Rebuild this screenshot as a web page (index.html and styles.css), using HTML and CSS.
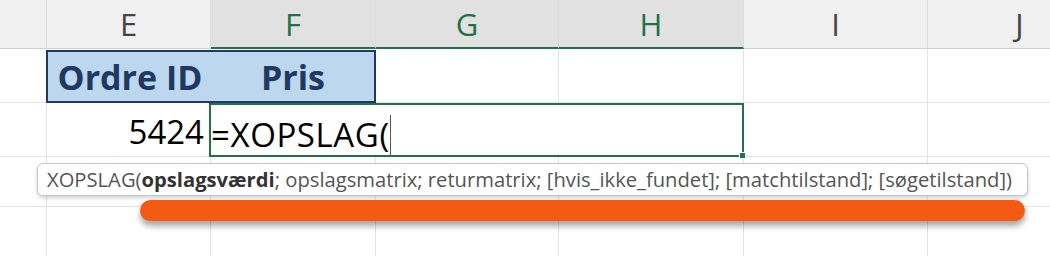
FILE: index.html
```html
<!DOCTYPE html>
<html lang="da">
<head>
  <meta charset="UTF-8">
  <title>XOPSLAG</title>
  <link rel="stylesheet" href="styles.css">
</head>
<body>
  <div class="sheet">
    <div class="grid">
      <!-- kolonneoverskrifter -->
      <div class="colhead"></div>
      <div class="colhead">E</div>
      <div class="colhead sel">F</div>
      <div class="colhead sel">G</div>
      <div class="colhead sel">H</div>
      <div class="colhead">I</div>
      <div class="colhead">J</div>

      <!-- række 1 -->
      <div class="cell"></div>
      <div class="cell head-box">
        <span class="hcell">Ordre ID</span>
        <span class="hcell">Pris</span>
      </div>
      <div class="cell"></div>
      <div class="cell"></div>
      <div class="cell"></div>
      <div class="cell"></div>

      <!-- række 2 -->
      <div class="cell"></div>
      <div class="cell num">5424</div>
      <div class="cell active">=XOPSLAG(<span class="caret"></span><span class="handle"></span></div>
      <div class="cell"></div>
      <div class="cell"></div>

      <!-- række 3-4 -->
      <div class="cell"></div><div class="cell"></div><div class="cell"></div><div class="cell"></div>
      <div class="cell"></div><div class="cell"></div><div class="cell"></div>
      <div class="cell"></div><div class="cell"></div><div class="cell"></div><div class="cell"></div>
      <div class="cell"></div><div class="cell"></div><div class="cell"></div>
    </div>

    <div class="tooltip">XOPSLAG(<b>opslagsværdi</b>; opslagsmatrix; returmatrix; [hvis_ikke_fundet]; [matchtilstand]; [søgetilstand])</div>
    <div class="marker"></div>
  </div>
</body>
</html>
```

FILE: styles.css
```css
body {
  margin: 0;
  background: #fff;
  overflow: hidden;
}
.sheet {
  position: relative;
  width: 1050px;
  height: 256px;
  overflow: hidden;
}
.grid {
  display: grid;
  grid-template-columns: 47px 164px 165px 183px 185px 184px 184px;
  grid-template-rows: 49px 54px 54px 50px 50px;
  width: 1112px;
}
.colhead {
  background: #f0f0f0;
  border-right: 1px solid #dcdcdc;
  border-bottom: 1px solid #d0d0d0;
  font-family: "Open Sans", sans-serif;
  font-size: 31px;
  color: #444;
  display: flex;
  align-items: center;
  justify-content: center;
  box-sizing: border-box;
}
.colhead.sel {
  background: #e1e1e1;
  color: #217346;
  border-bottom: 2px solid #217346;
}
.cell {
  border-right: 1px solid #e2e2e2;
  border-bottom: 1px solid #e2e2e2;
  box-sizing: border-box;
  font-family: "Open Sans", sans-serif;
  font-size: 33px;
  color: #000;
}
.head-box {
  grid-column: span 2;
  background: #bdd7ee;
  border: 2px solid #203864;
  display: grid;
  grid-template-columns: 164px 1fr;
  align-items: center;
  margin-left: -1px;
  margin-top: 1px;
}
.hcell {
  text-align: center;
  font-weight: bold;
  color: #203864;
  font-size: 34px;
  line-height: 1;
}
.num {
  text-align: right;
  padding: 12px 6px 0 0;
  line-height: 1;
}
.active {
  grid-column: span 3;
  position: relative;
  border: 2px solid #217346;
  margin-left: -2px;
  padding: 10px 0 0 0;
  line-height: 1;
  letter-spacing: 0.6px;
  white-space: nowrap;
}
.caret {
  display: inline-block;
  width: 0;
  height: 40px;
  border-left: 1px solid #555;
  vertical-align: -8px;
}
.handle {
  position: absolute;
  right: -4px;
  bottom: -4px;
  width: 5px;
  height: 5px;
  background: #217346;
  border: 1px solid #fff;
}
.tooltip {
  position: absolute;
  left: 37px;
  top: 163px;
  width: 991px;
  height: 33px;
  box-sizing: border-box;
  padding-left: 9px;
  background: #fff;
  border: 1px solid #c6c6c6;
  border-radius: 6px;
  box-shadow: 0 2px 4px rgba(0, 0, 0, 0.18);
  font-family: "Open Sans", sans-serif;
  font-size: 20.2px;
  line-height: 31px;
  color: #555;
  white-space: nowrap;
}
.tooltip b {
  color: #333;
}
.marker {
  position: absolute;
  left: 140px;
  top: 200px;
  width: 885px;
  height: 21px;
  border-radius: 11px;
  background: #f55a12;
  box-shadow: 0 5px 6px rgba(0, 0, 0, 0.35);
}
```
